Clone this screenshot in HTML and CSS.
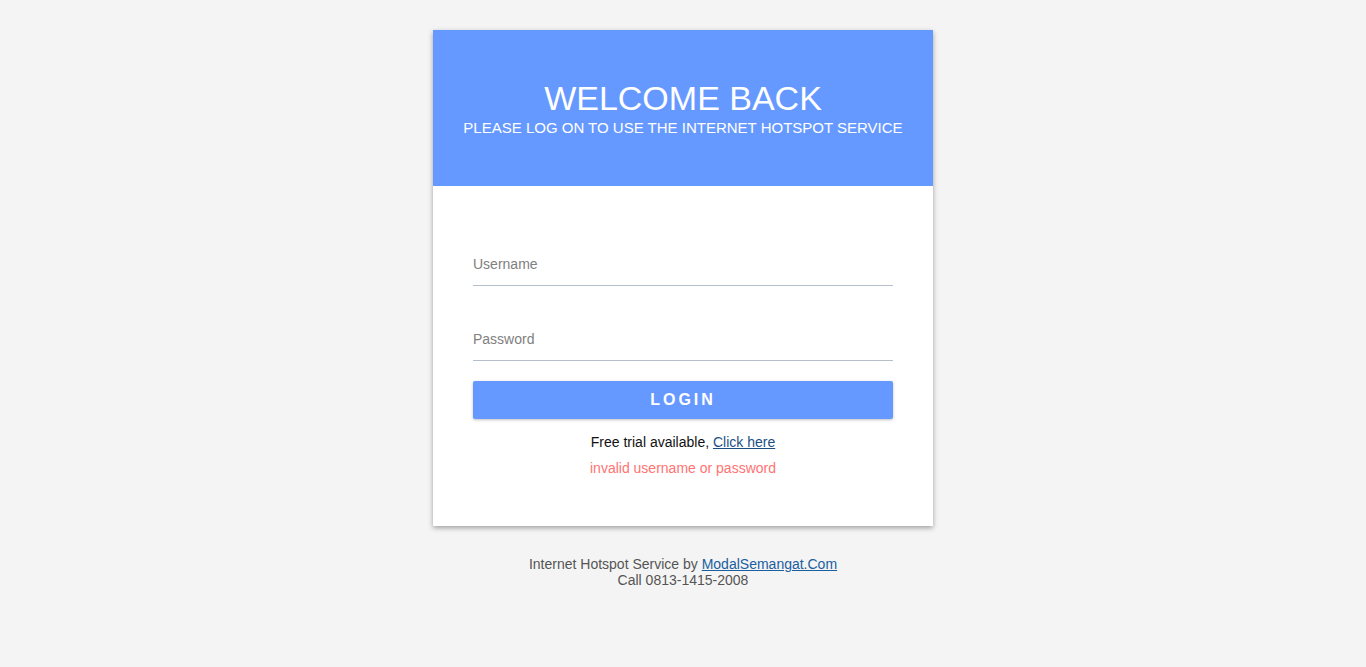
FILE: index.html
```
<!DOCTYPE html>
<html>
<head>
<title>Internet Hotspot Login</title>
<link rel="stylesheet" href="styles.css">
</head>
<body>
  <div class="login-card">
    <div class="login-header">
      <h1>WELCOME BACK</h1>
      <p>PLEASE LOG ON TO USE THE INTERNET HOTSPOT SERVICE</p>
    </div>
    <form class="login-form">
      <input type="text" name="username" placeholder="Username">
      <input type="password" name="password" placeholder="Password">
      <button type="submit">LOGIN</button>
      <p class="trial">Free trial available, <a href="#">Click here</a></p>
      <p class="error">invalid username or password</p>
    </form>
  </div>
  <div class="footer">
    Internet Hotspot Service by <a href="#">ModalSemangat.Com</a><br>
    Call 0813-1415-2008
  </div>
</body>
</html>
```

FILE: styles.css
```
* {
  margin: 0;
  padding: 0;
  box-sizing: border-box;
  font-family: "Liberation Sans", Arial, sans-serif;
}
body {
  background-color: #f4f4f4;
}

.login-card {
  width: 500px;
  margin: 30px auto 0;
  background: #fff;
  box-shadow: 0 2px 5px rgba(0, 0, 0, 0.35);
}

.login-header {
  background-color: #6699ff;
  color: #fff;
  text-align: center;
  padding: 48px 10px 49px;
}
.login-header h1 {
  font-size: 34px;
  font-weight: normal;
  line-height: 40px;
}
.login-header p {
  font-size: 15px;
  line-height: 18px;
  margin-top: 1px;
}

.login-form {
  display: flex;
  flex-direction: column;
  padding: 59px 40px 50px;
}
.login-form input {
  width: 100%;
  height: 41px;
  padding-bottom: 2px;
  border: 0;
  border-bottom: 1px solid #b4bfca;
  font-size: 14px;
  color: #333;
  outline: 0;
  background: transparent;
}
.login-form input::placeholder {
  color: #808080;
}
.login-form input + input {
  margin-top: 34px;
}
.login-form button {
  margin-top: 20px;
  height: 38px;
  border: 0;
  border-radius: 2px;
  background-color: #6699ff;
  color: #fff;
  font-size: 16px;
  font-weight: bold;
  letter-spacing: 3px;
  box-shadow: 0 1px 3px rgba(0, 0, 0, 0.25);
  cursor: pointer;
}

.trial, .error {
  text-align: center;
  font-size: 14px;
  line-height: 16px;
}
.trial {
  margin-top: 15px;
  color: #111;
}
.trial a {
  color: #1a4f85;
}
.error {
  margin-top: 10px;
  color: #ff7373;
}

.footer {
  margin-top: 30px;
  text-align: center;
  font-size: 14px;
  line-height: 16px;
  color: #555;
}
.footer a {
  color: #1a5ea0;
}
```
